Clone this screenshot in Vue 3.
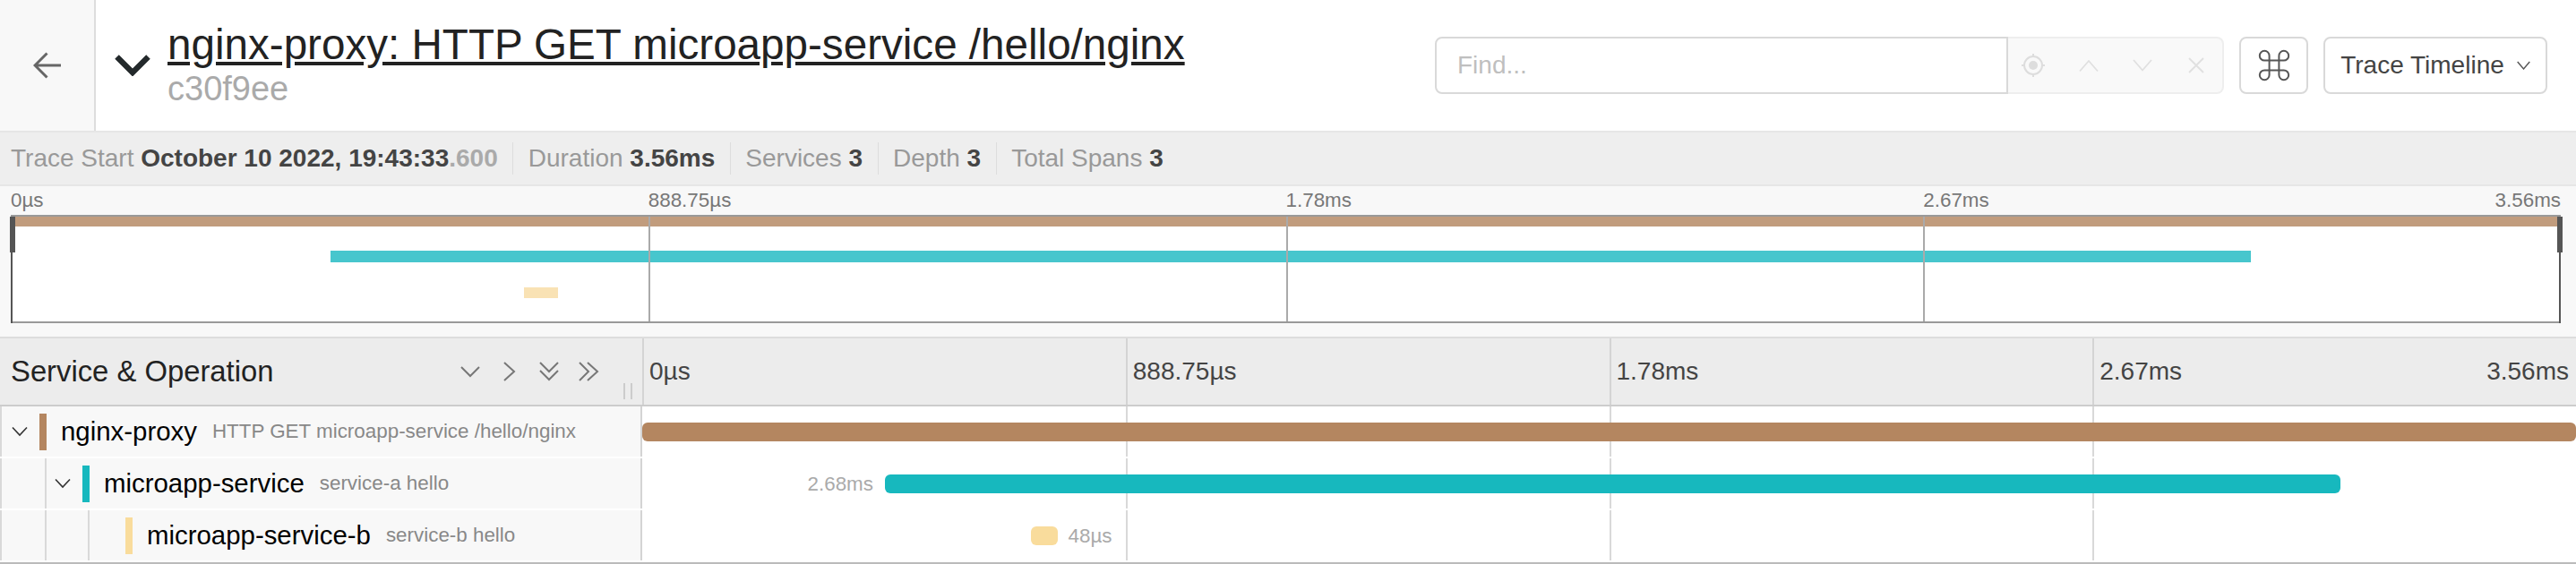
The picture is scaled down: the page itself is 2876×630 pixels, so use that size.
<script setup>
const summary = [
  { label: 'Duration', value: '3.56ms' },
  { label: 'Services', value: '3' },
  { label: 'Depth', value: '3' },
  { label: 'Total Spans', value: '3' },
]
const miniTicks = ['0µs', '888.75µs', '1.78ms', '2.67ms']
const headTicks = ['0µs', '888.75µs', '1.78ms', '2.67ms']
const spans = [
  { id: 1, name: 'nginx-proxy', op: 'HTTP GET microapp-service /hello/nginx', color: '#b48660', mini: '#c19c7d', left: 0, width: 100, depth: 0, open: true, miniTop: 0, miniH: 11 },
  { id: 2, name: 'microapp-service', op: 'service-a hello', color: '#17b8be', mini: '#47c6cd', left: 12.55, width: 75.28, depth: 1, open: true, label: '2.68ms', labelSide: 'left', miniTop: 37.5, miniH: 13 },
  { id: 3, name: 'microapp-service-b', op: 'service-b hello', color: '#f9dc9c', mini: '#f9e2b4', left: 20.12, width: 1.35, depth: 2, open: false, label: '48µs', labelSide: 'right', miniTop: 79, miniH: 12 },
]
</script>

<template>
  <div class="page">
    <header class="top">
      <div class="back">
        <svg width="31" height="30" viewBox="0 0 31 30" fill="none" stroke="#666" stroke-width="3"><path d="M2 15H31M15.5 1.5 2 15 15.5 28.5" /></svg>
      </div>
      <svg class="collapse" width="40" height="24" viewBox="0 0 40 24" fill="none" stroke="#23292b" stroke-width="6.4"><path d="M2.5 2.5 20 20 37.5 2.5" /></svg>
      <div class="heading">
        <h1>nginx-proxy: HTTP GET microapp-service /hello/nginx</h1>
        <small>c30f9ee</small>
      </div>
      <div class="find">
        <div class="find-input">Find...</div>
        <div class="find-tools">
          <svg width="26" height="26" viewBox="0 0 26 26" fill="none" stroke="#ddd" stroke-width="2"><circle cx="13" cy="13" r="10" /><circle cx="13" cy="13" r="5" fill="#ddd" stroke="none" /><path d="M13 0v3M13 23v3M0 13h3M23 13h3" /></svg>
          <svg width="22" height="16" viewBox="0 0 22 16" fill="none" stroke="#e0e0e0" stroke-width="1.8"><path d="M1 14.5 11 3 21 14.5" /></svg>
          <svg width="22" height="16" viewBox="0 0 22 16" fill="none" stroke="#e0e0e0" stroke-width="1.8"><path d="M1 2 11 13.5 21 2" /></svg>
          <svg width="18" height="18" viewBox="0 0 18 18" fill="none" stroke="#e0e0e0" stroke-width="1.8"><path d="M1 1 17 17M17 1 1 17" /></svg>
        </div>
      </div>
      <button class="btn cmd">
        <svg width="36" height="36" viewBox="2 2 20 20" fill="none" stroke="#555" stroke-width="1.1"><path d="M18 3a3 3 0 0 0-3 3v12a3 3 0 0 0 3 3 3 3 0 0 0 3-3 3 3 0 0 0-3-3H6a3 3 0 0 0-3 3 3 3 0 0 0 3 3 3 3 0 0 0 3-3V6a3 3 0 0 0-3-3 3 3 0 0 0-3 3 3 3 0 0 0 3 3h12a3 3 0 0 0 3-3 3 3 0 0 0-3-3z" /></svg>
      </button>
      <button class="btn select">
        <span>Trace Timeline</span>
        <svg width="15" height="10" viewBox="0 0 15 10" fill="none" stroke="#555" stroke-width="1.4"><path d="M.7 1 7.5 9 14.3 1" /></svg>
      </button>
    </header>

    <section class="summary">
      <span class="item">Trace Start <b>October 10 2022, 19:43:33</b><b class="ms">.600</b></span>
      <span v-for="s in summary" :key="s.label" class="item">{{ s.label }} <b>{{ s.value }}</b></span>
    </section>

    <section class="mini">
      <div class="mini-labels">
        <span v-for="t in miniTicks" :key="t" class="mini-label">{{ t }}</span>
        <span class="mini-last">3.56ms</span>
      </div>
      <div class="mini-track">
        <i v-for="n in 3" :key="n" class="mini-tick" :style="{ left: n * 25 + '%' }"></i>
        <i v-for="s in spans" :key="s.id" class="mini-bar" :style="{ left: s.left + '%', width: s.width + '%', top: s.miniTop + 'px', height: s.miniH + 'px', background: s.mini }"></i>
        <i class="grip left"></i>
        <i class="grip right"></i>
      </div>
    </section>

    <section class="table-head">
      <div class="left-col head-title">
        <span>Service &amp; Operation</span>
        <div class="tools">
          <svg width="24" height="24" viewBox="0 0 24 24"><path d="M2 7 12 17 22 7" /></svg>
          <svg width="24" height="24" viewBox="0 0 24 24"><path d="M6 2 17 12 6 22" /></svg>
          <svg width="24" height="24" viewBox="0 0 24 24"><path d="M2 2 12 12 22 2M2 11 12 21 22 11" /></svg>
          <svg width="24" height="24" viewBox="0 0 24 24"><path d="M2 2 12 12 2 22M11 2 22 12 11 22" /></svg>
        </div>
        <i class="resize"></i>
      </div>
      <div class="head-ticks">
        <div v-for="t in headTicks" :key="t" class="head-tick">{{ t }}</div>
        <span class="last-tick">3.56ms</span>
      </div>
    </section>

    <section class="rows">
      <div v-for="s in spans" :key="s.id" class="row">
        <div class="left-col span-name">
          <i class="guide first"></i>
          <i v-for="d in s.depth" :key="d" class="guide" :style="{ left: (d * 48 + 2) + 'px' }"></i>
          <div class="span-inner" :style="{ paddingLeft: s.depth * 48 + 'px' }">
            <svg v-if="s.open" class="twist" width="18" height="12" viewBox="0 0 18 12" fill="none" stroke="#333" stroke-width="1.6"><path d="M1 1.5 9 10 17 1.5" /></svg>
            <span v-else class="twist-space"></span>
            <i class="swatch" :style="{ background: s.color }"></i>
            <span class="name">{{ s.name }}</span>
            <span class="op">{{ s.op }}</span>
          </div>
        </div>
        <div class="span-view">
          <i v-for="n in 3" :key="n" class="grid-line" :style="{ left: n * 25 + '%' }"></i>
          <div class="bar" :style="{ left: s.left + '%', width: s.width + '%', background: s.color }">
            <span v-if="s.label" class="dur" :class="s.labelSide">{{ s.label }}</span>
          </div>
        </div>
      </div>
    </section>
  </div>
</template>

<style>
html, body { margin: 0; background: #fff; }
</style>

<style scoped>
.page { width: 2876px; height: 630px; overflow: hidden; font-family: "Liberation Sans", Arial, sans-serif; color: #222; }
.top { height: 146px; display: flex; align-items: center; border-bottom: 2px solid #e6e6e6; }
.back { width: 105px; height: 100%; background: #f8f8f8; border-right: 2px solid #ddd; display: flex; align-items: center; justify-content: center; flex: none; }
.collapse { margin: 0 19px 0 21px; flex: none; }
.heading { flex: 1; min-width: 0; margin-top: -5px; }
h1 { margin: 0; font-size: 47.6px; font-weight: 400; line-height: 56px; text-decoration: underline; color: #222; white-space: nowrap; }
small { display: block; font-size: 38px; line-height: 42px; color: #aaa; }
.find { display: flex; height: 64px; width: 881px; flex: none; }
.find-input { width: 640px; box-sizing: border-box; border: 2px solid #d9d9d9; border-radius: 8px 0 0 8px; font-size: 28px; line-height: 60px; padding-left: 23px; color: #bfbfbf; }
.find-tools { flex: 1; box-sizing: border-box; display: flex; align-items: center; gap: 38px; padding-left: 15px; background: #f9f9f9; border: 2px solid #eee; border-left: 0; border-radius: 0 8px 8px 0; }
.find-tools svg:last-child { margin-left: 2px; }
.btn { height: 64px; box-sizing: border-box; background: #fff; border: 2px solid #d9d9d9; border-radius: 8px; font: inherit; font-size: 28px; color: #444; display: flex; align-items: center; justify-content: center; padding: 0; flex: none; }
.cmd { width: 77px; margin-left: 17px; }
.select { width: 250px; margin: 0 32px 0 17px; gap: 14px; }
.summary { height: 60px; box-sizing: border-box; background: #eee; border-bottom: 2px solid #e6e6e6; display: flex; align-items: center; padding-left: 12px; font-size: 28px; color: #999; white-space: nowrap; }
.item { padding-right: 16.5px; margin-right: 16.5px; border-right: 1px solid #ddd; line-height: 36px; }
.item:last-child { border: 0; }
.item b { color: #444; }
.item b.ms { color: #aaa; }
.mini { height: 170px; box-sizing: border-box; background: #f8f8f8; border-bottom: 2px solid #ddd; padding: 0 17px 0 12px; }
.mini-labels { position: relative; height: 32px; display: flex; align-items: center; font-size: 22.4px; color: #777; }
.mini-label { width: 25%; flex: none; }
.mini-last { position: absolute; right: 0; }
.mini-track { position: relative; height: 121px; background: #fff; border-top: 2px solid #999; border-bottom: 2px solid #999; box-sizing: border-box; }
.mini-track i { position: absolute; display: block; }
.mini-tick { top: 0; bottom: 0; width: 2px; background: #aaa; z-index: 2; }
.grip { width: 6px; height: 40px; top: 0; background: #555; z-index: 3; }
.grip::after { content: ""; position: absolute; top: 40px; width: 2px; height: 79px; background: #555; }
.grip.left { left: -1px; }
.grip.left::after { left: 1px; }
.grip.right { right: -2px; }
.grip.right::after { right: 2px; }
.table-head { height: 76px; display: flex; background: #ececec; border-bottom: 2px solid #ccc; box-sizing: border-box; }
.left-col { width: 717px; flex: none; box-sizing: border-box; }
.head-title { position: relative; display: flex; align-items: center; padding-left: 12px; padding-right: 48px; font-size: 32.8px; color: #222; }
.tools { margin-left: auto; display: flex; gap: 20px; }
.tools svg { fill: none; stroke: #777; stroke-width: 2; }
.resize { position: absolute; left: 696px; top: 50px; width: 10px; height: 18px; box-sizing: border-box; border-left: 2px solid #ccc; border-right: 2px solid #ccc; }
.head-ticks { position: relative; flex: 1; display: flex; color: #444; font-size: 28px; }
.head-tick { width: 25%; box-sizing: border-box; border-left: 2px solid #d4d4d4; padding-left: 6px; display: flex; align-items: center; }
.last-tick { position: absolute; right: 8px; top: 0; bottom: 0; display: flex; align-items: center; }
.rows { height: 174px; border-bottom: 3px solid #bbb; }
.row { height: 58px; display: flex; border-bottom: 2px solid #fff; box-sizing: border-box; }
.span-name { position: relative; background: #f8f8f8; border-right: 2px solid #d4d4d4; }
.guide { position: absolute; top: 0; bottom: 0; width: 2px; background: #d9d9d9; }
.guide.first { left: 0; }
.span-inner { display: flex; align-items: center; height: 100%; white-space: nowrap; }
.twist { margin-left: 13px; margin-right: 13px; flex: none; }
.twist-space { width: 44px; flex: none; }
.swatch { width: 8px; height: 41px; flex: none; }
.name { margin-left: 16px; font-size: 29.4px; color: #000; }
.op { margin-left: 17px; font-size: 22.4px; color: #888; }
.span-view { position: relative; flex: 1; }
.grid-line { position: absolute; top: 0; bottom: 0; width: 2px; background: #d9d9d9; }
.bar { position: absolute; top: 18px; height: 21px; border-radius: 6px; }
.dur { position: absolute; top: 0; line-height: 21px; font-size: 22.4px; color: #aaa; white-space: nowrap; }
.dur.left { right: calc(100% + 13px); }
.dur.right { left: calc(100% + 12px); }
</style>
